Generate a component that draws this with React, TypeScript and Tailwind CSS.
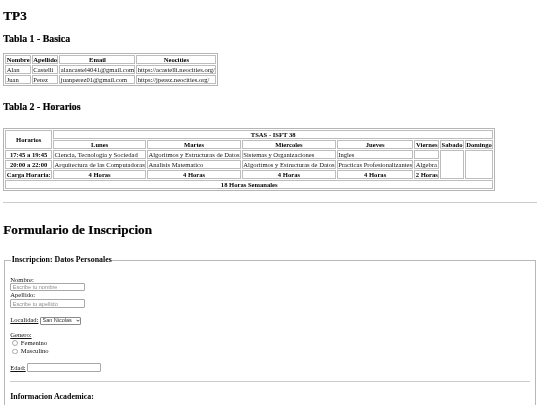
const th = "border border-[#bdbdbd] px-[0.35px] py-0 font-bold text-center whitespace-nowrap text-black";
const td = "border border-[#bdbdbd] px-[0.35px] py-0 text-left whitespace-nowrap font-normal";
const textInput =
  "block w-[75px] border border-[#a8a8a8] rounded-[1px] px-[1.5px] text-[5.5px] [font-family:'Liberation_Sans',sans-serif] placeholder:text-[#8f8f8f]";
const radio = "size-[5.5px] appearance-none rounded-full border border-[#aaaaaa]";
const heading = "font-bold text-black [-webkit-text-stroke:0.2px_black]";

export default function App() {
  return (
    <div className="h-[405px] overflow-hidden bg-white px-[3.3px] text-[6.6px] leading-[7.6px] text-[#111] blur-[0.2px] [font-family:'Liberation_Serif',serif]">
      <h1 className={`pt-[8px] text-[13.2px] leading-[15.2px] ${heading}`}>TP3</h1>
      <h2 className={`mt-[10px] text-[9.9px] leading-[11.4px] ${heading}`}>Tabla 1 - Basica</h2>
      <table className="mt-[8px] border-separate border-spacing-[1px] border border-[#b5b5b5] leading-[7px]">
        <thead>
          <tr>
            <th className={th}>Nombre</th>
            <th className={th}>Apellido</th>
            <th className={th}>Email</th>
            <th className={th}>Neocities</th>
          </tr>
        </thead>
        <tbody>
          <tr>
            <td className={td}>Alan</td>
            <td className={td}>Castelli</td>
            <td className={td}>alancastel4041@gmail.com</td>
            <td className={td}>https://acastelli.neocities.org/</td>
          </tr>
          <tr>
            <td className={td}>Juan</td>
            <td className={td}>Perez</td>
            <td className={td}>juanperez01@gmail.com</td>
            <td className={td}>https://jperez.neocities.org/</td>
          </tr>
        </tbody>
      </table>

      <h2 className={`mt-[15px] text-[9.9px] leading-[11.4px] ${heading}`}>Tabla 2 - Horarios</h2>
      <table className="mt-[16px] border-separate border-spacing-[1px] border border-[#b5b5b5] leading-[7px]">
        <tbody>
          <tr>
            <th rowSpan={2} className={th}>Horarios</th>
            <th colSpan={7} className={th}>TSAS - ISFT 38</th>
          </tr>
          <tr>
            <th className={th}>Lunes</th>
            <th className={th}>Martes</th>
            <th className={th}>Miercoles</th>
            <th className={th}>Jueves</th>
            <th className={th}>Viernes</th>
            <th className={th}>Sabado</th>
            <th className={th}>Domingo</th>
          </tr>
          <tr>
            <th className={th}>17:45 a 19:45</th>
            <td className={td}>Ciencia, Tecnologia y Sociedad</td>
            <td className={td}>Algoritmos y Estructuras de Datos</td>
            <td className={td}>Sistemas y Organizaciones</td>
            <td className={td}>Ingles</td>
            <td className={td}></td>
            <td rowSpan={3} className={td}></td>
            <td rowSpan={3} className={td}></td>
          </tr>
          <tr>
            <th className={th}>20:00 a 22:00</th>
            <td className={td}>Arquitectura de las Computadoras</td>
            <td className={td}>Analisis Matematico</td>
            <td className={td}>Algoritmos y Estructuras de Datos</td>
            <td className={td}>Practicas Profesionalizantes</td>
            <td className={td}>Algebra</td>
          </tr>
          <tr>
            <th className={th}>Carga Horaria:</th>
            <th className={th}>4 Horas</th>
            <th className={th}>4 Horas</th>
            <th className={th}>4 Horas</th>
            <th className={th}>4 Horas</th>
            <th className={th}>2 Horas</th>
          </tr>
          <tr>
            <th colSpan={8} className={th}>18 Horas Semanales</th>
          </tr>
        </tbody>
      </table>

      <hr className="mt-[11px] border-t border-[#cccccc]" />
      <h1 className={`mt-[19px] text-[13.2px] leading-[15.2px] ${heading}`}>Formulario de Inscripcion</h1>

      <fieldset className="mx-[1px] mt-[19px] border border-[#b8b8b8] px-[5px] pb-[20px]">
        <legend className="ml-[1px] px-[0.5px] text-[7.9px] font-bold text-black">Inscripcion: Datos Personales</legend>
        <div className="mt-[12px]">Nombre:</div>
        <input placeholder="Escribe tu nombre" className={`${textInput} h-[8px]`} />
        <div>Apellido:</div>
        <input placeholder="Escribe tu apellido" className={`${textInput} h-[9px]`} />

        <div className="mt-[8px] flex items-center gap-[1px]">
          <span className="underline">Localidad:</span>
          <div className="relative h-[8px] w-[41px]">
            <select className="h-full w-full appearance-none rounded-[1px] border border-[#8a8a8a] bg-white px-[2px] text-[5.5px] leading-none text-[#333] [font-family:'Liberation_Sans',sans-serif]">
              <option>San Nicolas</option>
            </select>
            <svg viewBox="0 0 8 6" className="pointer-events-none absolute top-[2.5px] right-[1px] h-[3px] w-[4px]">
              <path d="M1 1.5 L4 4.5 L7 1.5" fill="none" stroke="#222" strokeWidth="1.6" />
            </svg>
          </div>
        </div>

        <div className="mt-[7px] underline">Genero:</div>
        <label className="flex items-center gap-[3px] pl-[2px] leading-[8.5px]">
          <input type="radio" name="genero" className={radio} />
          Femenino
        </label>
        <label className="flex items-center gap-[3px] pl-[2px] leading-[8.5px]">
          <input type="radio" name="genero" className={radio} />
          Masculino
        </label>

        <div className="mt-[7.5px] flex items-center gap-[1px]">
          <span className="underline">Edad:</span>
          <input type="number" className="h-[9px] w-[74px] rounded-[1px] border border-[#a8a8a8]" />
        </div>

        <hr className="mt-[9px] border-t border-[#cccccc]" />
        <h3 className="mt-[11px] text-[7.9px] font-bold text-black">Informacion Academica:</h3>
      </fieldset>
    </div>
  );
}
